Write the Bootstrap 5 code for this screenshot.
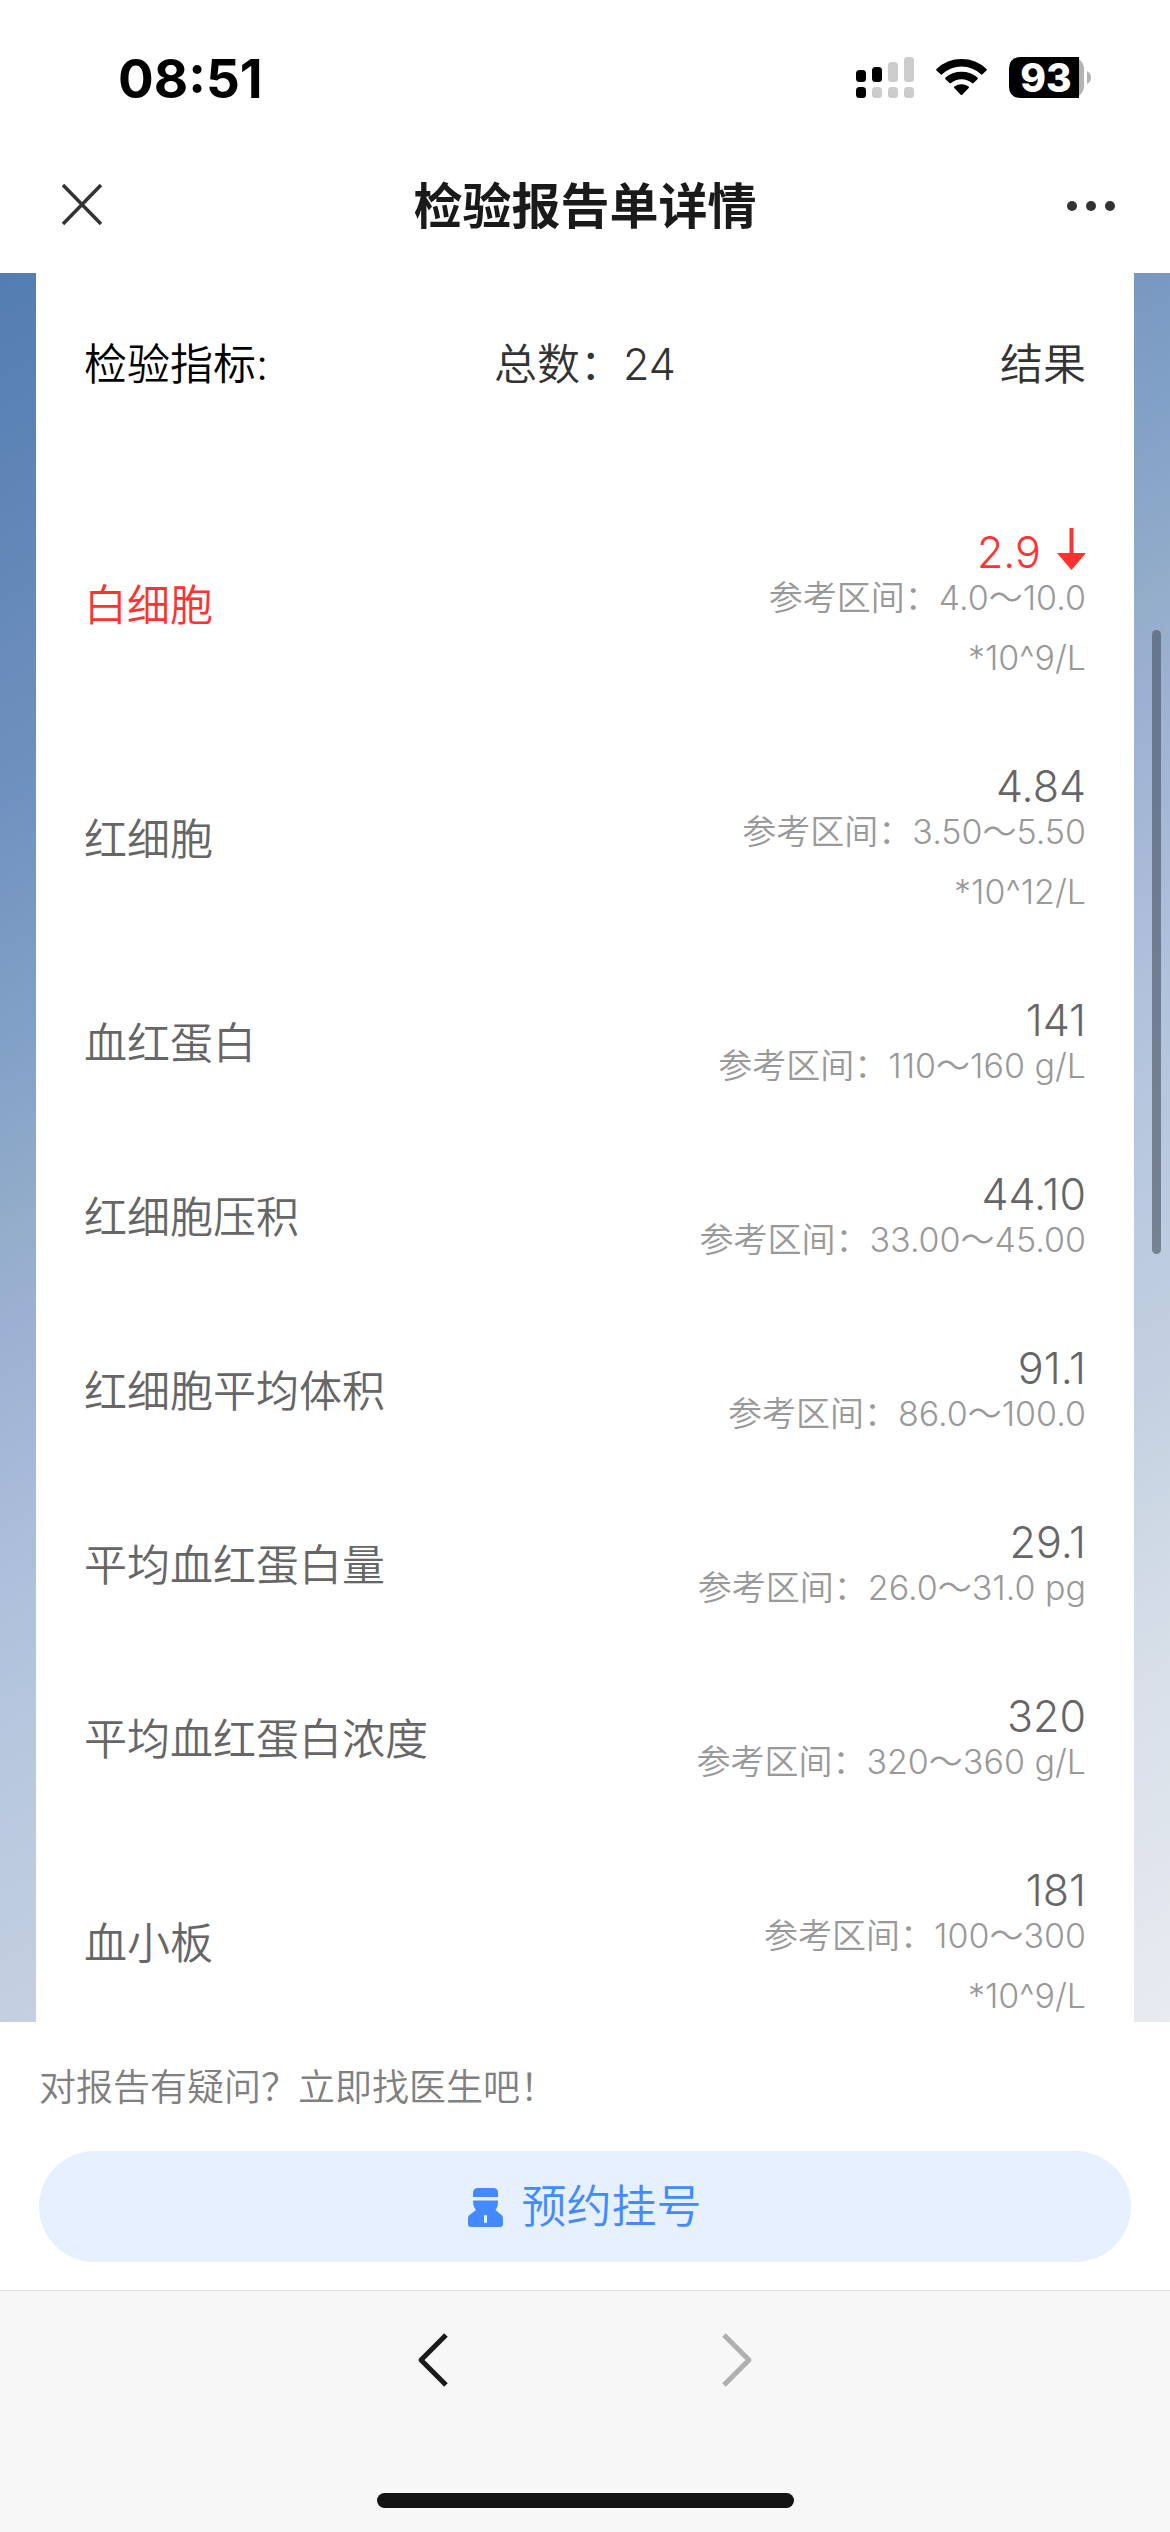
<!DOCTYPE html>
<html lang="zh-CN">
<head>
<meta charset="utf-8">
<meta name="viewport" content="width=device-width, initial-scale=1">
<title>检验报告单详情</title>
<link href="https://cdn.jsdelivr.net/npm/bootstrap@5.3.0/dist/css/bootstrap.min.css" rel="stylesheet">
<style>
  body { font-family: Inter, "Noto Sans CJK SC", sans-serif; color: #666; background: #fff; }
  svg { display: block; }
  .status-bar { height: 141px; padding: 48px 78px 0 118px; color: #000; }
  .clock { font-size: 53px; line-height: 62px; font-weight: 700; }
  .charge { font-size: 39px; font-weight: 800; }
  .title-bar { height: 132px; padding: 0 54px; }
  .title-bar h1 { font-size: 49px; line-height: 72px; font-weight: 700; color: #1a1a1a; }
  .icon-btn { border: 0; background: none; padding: 0; }
  .title-side { width: 62px; }
  .report-area { padding: 0 36px; background: linear-gradient(151deg, #547db1 0%, #6e90be 21%, #84a2c8 33%, #93adca 40%, #9db0d3 44%, #b2c4dd 58%, #c4d0e1 73%, #cad6e3 77%, #d8dfe9 85%, #e8ebf1 100%); }
  .report-card { padding: 0 48px; }
  .report-table { table-layout: fixed; margin: 0; font-size: 43px; }
  .report-table th, .report-table td { padding: 0; border: 0; font-weight: 350; vertical-align: middle; }
  .report-table thead th { padding: 61px 0 93px; line-height: 60px; color: #333; }
  .report-table thead th:first-child { color: #000; }
  .report-table tbody th, .report-table tbody td { padding: 36px 0 33px; line-height: 45px; color: #666; }
  .col-side { width: 36%; }
  .report-table tbody .abnormal th, .abnormal .result { color: #ff3131; }
  .result { line-height: 59px; margin-bottom: -14px; }
  .range { font-size: 34px; line-height: 60px; color: #999; }
  .scroll-thumb { right: 9px; top: 357px; width: 9px; height: 624px; border-radius: 5px; background: rgba(70, 80, 95, .6); }
  .ask-panel { padding: 36px 39px 28px; }
  .ask-panel p { font-size: 37px; line-height: 60px; margin-bottom: 33px; font-weight: 350; color: #808080; }
  .book-btn { height: 111px; font-size: 45px; line-height: 60px; color: #4389ff; background: #e6f0ff; border: 0; gap: 17px; font-weight: 350; }
  .book-btn:hover { color: #4389ff; background: #dbe9ff; }
  .browser-nav { height: 242px; padding: 39px 0 24px; background: #f7f7f7; border-top: 1px solid #e0e0e0; }
  .nav-pair { gap: 244px; }
  .home-bar { width: 417px; height: 15px; border-radius: 8px; background: #141414; }
</style>
</head>
<body class="vh-100 d-flex flex-column overflow-hidden">
  <header class="flex-shrink-0">
    <div class="status-bar d-flex justify-content-between align-items-start">
      <div class="clock">08:51</div>
      <svg width="254" height="60" viewBox="0 0 254 60" role="img" aria-label="信号、无线网络、电量 93">
        <g fill="#000">
          <rect x="18" y="22" width="10" height="12" rx="3.500"/><rect x="34" y="19" width="10" height="15" rx="3.500"/><rect x="18" y="39" width="10" height="11" rx="3.500"/>
        </g>
        <g fill="#ccc">
          <rect x="50" y="14" width="10" height="20" rx="3.500"/><rect x="66" y="9" width="10" height="25" rx="3.500"/>
          <rect x="34" y="39" width="10" height="11" rx="3.500"/><rect x="50" y="39" width="10" height="11" rx="3.500"/><rect x="66" y="39" width="10" height="11" rx="3.500"/>
        </g>
        <g fill="#000">
          <path d="M98.500 22.500Q97.700 21.700 98.500 20.900Q109 11 123.500 11T148.500 20.900Q149.300 21.700 148.500 22.500L144.500 26.300Q143.700 27 142.900 26.300Q134.500 18.500 123.500 18.500T104.100 26.300Q103.300 27 102.500 26.300Z"/>
          <path d="M107.500 31.200Q106.700 30.400 107.500 29.600Q114 23.800 123.500 23.800T139.500 29.600Q140.300 30.400 139.500 31.200L135.500 35.100Q134.800 35.800 134 35.100Q129.500 31.300 123.500 31.300T113 35.100Q112.200 35.800 111.500 35.100Z"/>
          <path d="M116.300 39.900Q115.500 39.100 116.300 38.400Q119.500 36.300 123.500 36.300T130.700 38.400Q131.500 39.100 130.700 39.900L124.300 46.700Q123.500 47.500 122.700 46.700Z"/>
        </g>
        <rect x="171" y="9" width="75" height="41" rx="12" fill="#b3b3b3"/>
        <path d="M183 9H241V50H183Q171 50 171 38V21Q171 9 183 9Z" fill="#000"/>
        <path d="M249 23Q253 25 253 29.500T249 36Z" fill="#b3b3b3"/>
        <text class="charge" x="208" y="44" text-anchor="middle" fill="#fff">93</text>
      </svg>
    </div>
    <div class="title-bar d-flex justify-content-between align-items-center">
      <div class="title-side">
        <button class="icon-btn" type="button" aria-label="关闭">
          <svg width="56" height="56" viewBox="0 0 56 56" fill="none" stroke="#333" stroke-width="3.500"><path d="M9 9L47 48M47 9L9 48"/></svg>
        </button>
      </div>
      <h1 class="m-0">检验报告单详情</h1>
      <div class="title-side d-flex justify-content-end">
        <button class="icon-btn" type="button" aria-label="更多">
          <svg width="50" height="50" viewBox="0 0 50 50" fill="#333"><circle cx="6" cy="24" r="5"/><circle cx="25" cy="24" r="5"/><circle cx="44" cy="24" r="5"/></svg>
        </button>
      </div>
    </div>
  </header>

  <main class="report-area flex-grow-1 overflow-hidden position-relative">
    <div class="report-card bg-white">
      <table class="table report-table">
        <colgroup><col class="col-side"><col><col class="col-side"></colgroup>
        <thead>
          <tr><th scope="col">检验指标:</th><th scope="col" class="text-center">总数：24</th><th scope="col" class="text-end">结果</th></tr>
        </thead>
        <tbody>
          <tr class="abnormal">
            <th scope="row">白细胞</th>
            <td colspan="2" class="text-end">
              <div class="result d-flex justify-content-end align-items-center">2.9<svg class="ms-3 mb-2" width="29" height="42" viewBox="0 0 29 42" fill="#ff3131"><path d="M12.500 0h4v25h12.500L14.500 42L0 25h12.500z"/></svg></div>
              <div class="range">参考区间：4.0～10.0<br>*10^9/L</div>
            </td>
          </tr>
          <tr><th scope="row">红细胞</th><td colspan="2" class="text-end"><div class="result">4.84</div><div class="range">参考区间：3.50～5.50<br>*10^12/L</div></td></tr>
          <tr><th scope="row">血红蛋白</th><td colspan="2" class="text-end"><div class="result">141</div><div class="range">参考区间：110～160 g/L</div></td></tr>
          <tr><th scope="row">红细胞压积</th><td colspan="2" class="text-end"><div class="result">44.10</div><div class="range">参考区间：33.00～45.00</div></td></tr>
          <tr><th scope="row">红细胞平均体积</th><td colspan="2" class="text-end"><div class="result">91.1</div><div class="range">参考区间：86.0～100.0</div></td></tr>
          <tr><th scope="row">平均血红蛋白量</th><td colspan="2" class="text-end"><div class="result">29.1</div><div class="range">参考区间：26.0～31.0 pg</div></td></tr>
          <tr><th scope="row">平均血红蛋白浓度</th><td colspan="2" class="text-end"><div class="result">320</div><div class="range">参考区间：320～360 g/L</div></td></tr>
          <tr><th scope="row">血小板</th><td colspan="2" class="text-end"><div class="result">181</div><div class="range">参考区间：100～300<br>*10^9/L</div></td></tr>
        </tbody>
      </table>
    </div>
    <div class="scroll-thumb position-absolute"></div>
  </main>

  <section class="ask-panel flex-shrink-0 bg-white">
    <p>对报告有疑问？立即找医生吧！</p>
    <button class="btn book-btn rounded-pill w-100 d-flex justify-content-center align-items-center" type="button">
      <svg width="36" height="40" viewBox="0 0 36 40" fill="#4389ff"><path d="M5 10V6Q5 1 10 1H25Q30 1 30 6V10ZM5 13.500H30Q30 20 27.500 23L34 28.500Q35 29.500 35 31V37Q35 40 32 40H3Q0 40 0 37V31Q0 29.500 1 28.500L8 23Q5 20 5 13.500Z"/><rect x="16" y="28" width="3" height="8" rx="1" fill="#e6f0ff"/></svg>
      预约挂号
    </button>
  </section>

  <footer class="browser-nav flex-shrink-0 d-flex flex-column justify-content-between align-items-center">
    <div class="nav-pair d-flex">
      <button class="icon-btn" type="button" aria-label="后退"><svg width="60" height="60" viewBox="0 0 60 60" fill="none" stroke="#1a1a1a" stroke-width="5" stroke-linejoin="round"><path d="M43 5L18 30L43 55"/></svg></button>
      <button class="icon-btn" type="button" aria-label="前进"><svg width="60" height="60" viewBox="0 0 60 60" fill="none" stroke="#b0b0b0" stroke-width="5" stroke-linejoin="round"><path d="M17 5L42 30L17 55"/></svg></button>
    </div>
    <div class="home-bar"></div>
  </footer>
<script src="https://cdn.jsdelivr.net/npm/bootstrap@5.3.0/dist/js/bootstrap.bundle.min.js"></script>
</body>
</html>
